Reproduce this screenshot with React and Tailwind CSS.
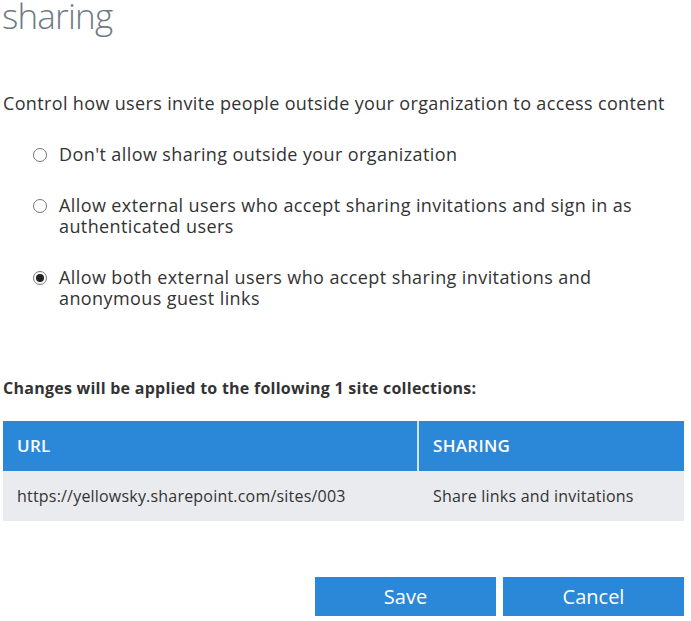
import React from "react";

/**
 * Sharing settings panel
 * - Light gray title, radio options, affected site collections table, Save/Cancel
 */

const font = { fontFamily: '"Open Sans", "Noto Sans", sans-serif' };

export default function App() {
  return (
    <div className="h-[621px] w-[691px] overflow-hidden bg-white text-[#333]" style={font}>
      <div className="pl-[2px] text-[35px] font-light leading-[32px] tracking-[-0.8px] text-[#6f7a84]">sharing</div>

      <p className="mt-[61px] pl-[3px] text-[18px] leading-[21px] tracking-[0.35px]">
        Control how users invite people outside your organization to access content
      </p>

      <div className="mt-[30px] flex flex-col gap-[30px] pl-[33px]">
        <Option label="Don't allow sharing outside your organization" />
        <Option label={<>Allow external users who accept sharing invitations and sign in as<br />authenticated users</>} />
        <Option checked label={<>Allow both external users who accept sharing invitations and<br />anonymous guest links</>} />
      </div>

      <div className="mt-[69px] pl-[3px] text-[16px] font-bold leading-[20px] tracking-[0.25px]">
        Changes will be applied to the following 1 site collections:
      </div>

      <div className="ml-[3px] mt-[23px] w-[681px] text-[16px] tracking-[0.2px]">
        <div className="flex h-[50px] bg-[#2b88d8] text-[17px] font-semibold tracking-[0.3px] text-white">
          <div className="flex w-[414px] items-center pl-[14px]">URL</div>
          <div className="w-[2px] bg-[#cfe3f5]" />
          <div className="flex flex-1 items-center pl-[14px]">SHARING</div>
        </div>
        <div className="flex h-[50px] bg-[#eaebee]">
          <div className="flex w-[416px] items-center pl-[14px]">https://yellowsky.sharepoint.com/sites/003</div>
          <div className="flex flex-1 items-center pl-[14px]">Share links and invitations</div>
        </div>
      </div>

      <div className="mt-[56px] flex justify-end gap-[7px] pr-[7px]">
        <Button>Save</Button>
        <Button>Cancel</Button>
      </div>
    </div>
  );
}

function Option({ label, checked }) {
  return (
    <label className="flex items-start gap-[12px] text-[18px] leading-[21px] tracking-[0.4px]">
      <span className="mt-[4px] flex size-[14px] shrink-0 items-center justify-center rounded-full border border-[#777] bg-white">
        {checked && <span className="size-[8px] rounded-full bg-[#222]" />}
      </span>
      <span>{label}</span>
    </label>
  );
}

function Button({ children }) {
  return (
    <button className="h-[39px] w-[181px] bg-[#2b88d8] text-[20px] text-white">{children}</button>
  );
}
